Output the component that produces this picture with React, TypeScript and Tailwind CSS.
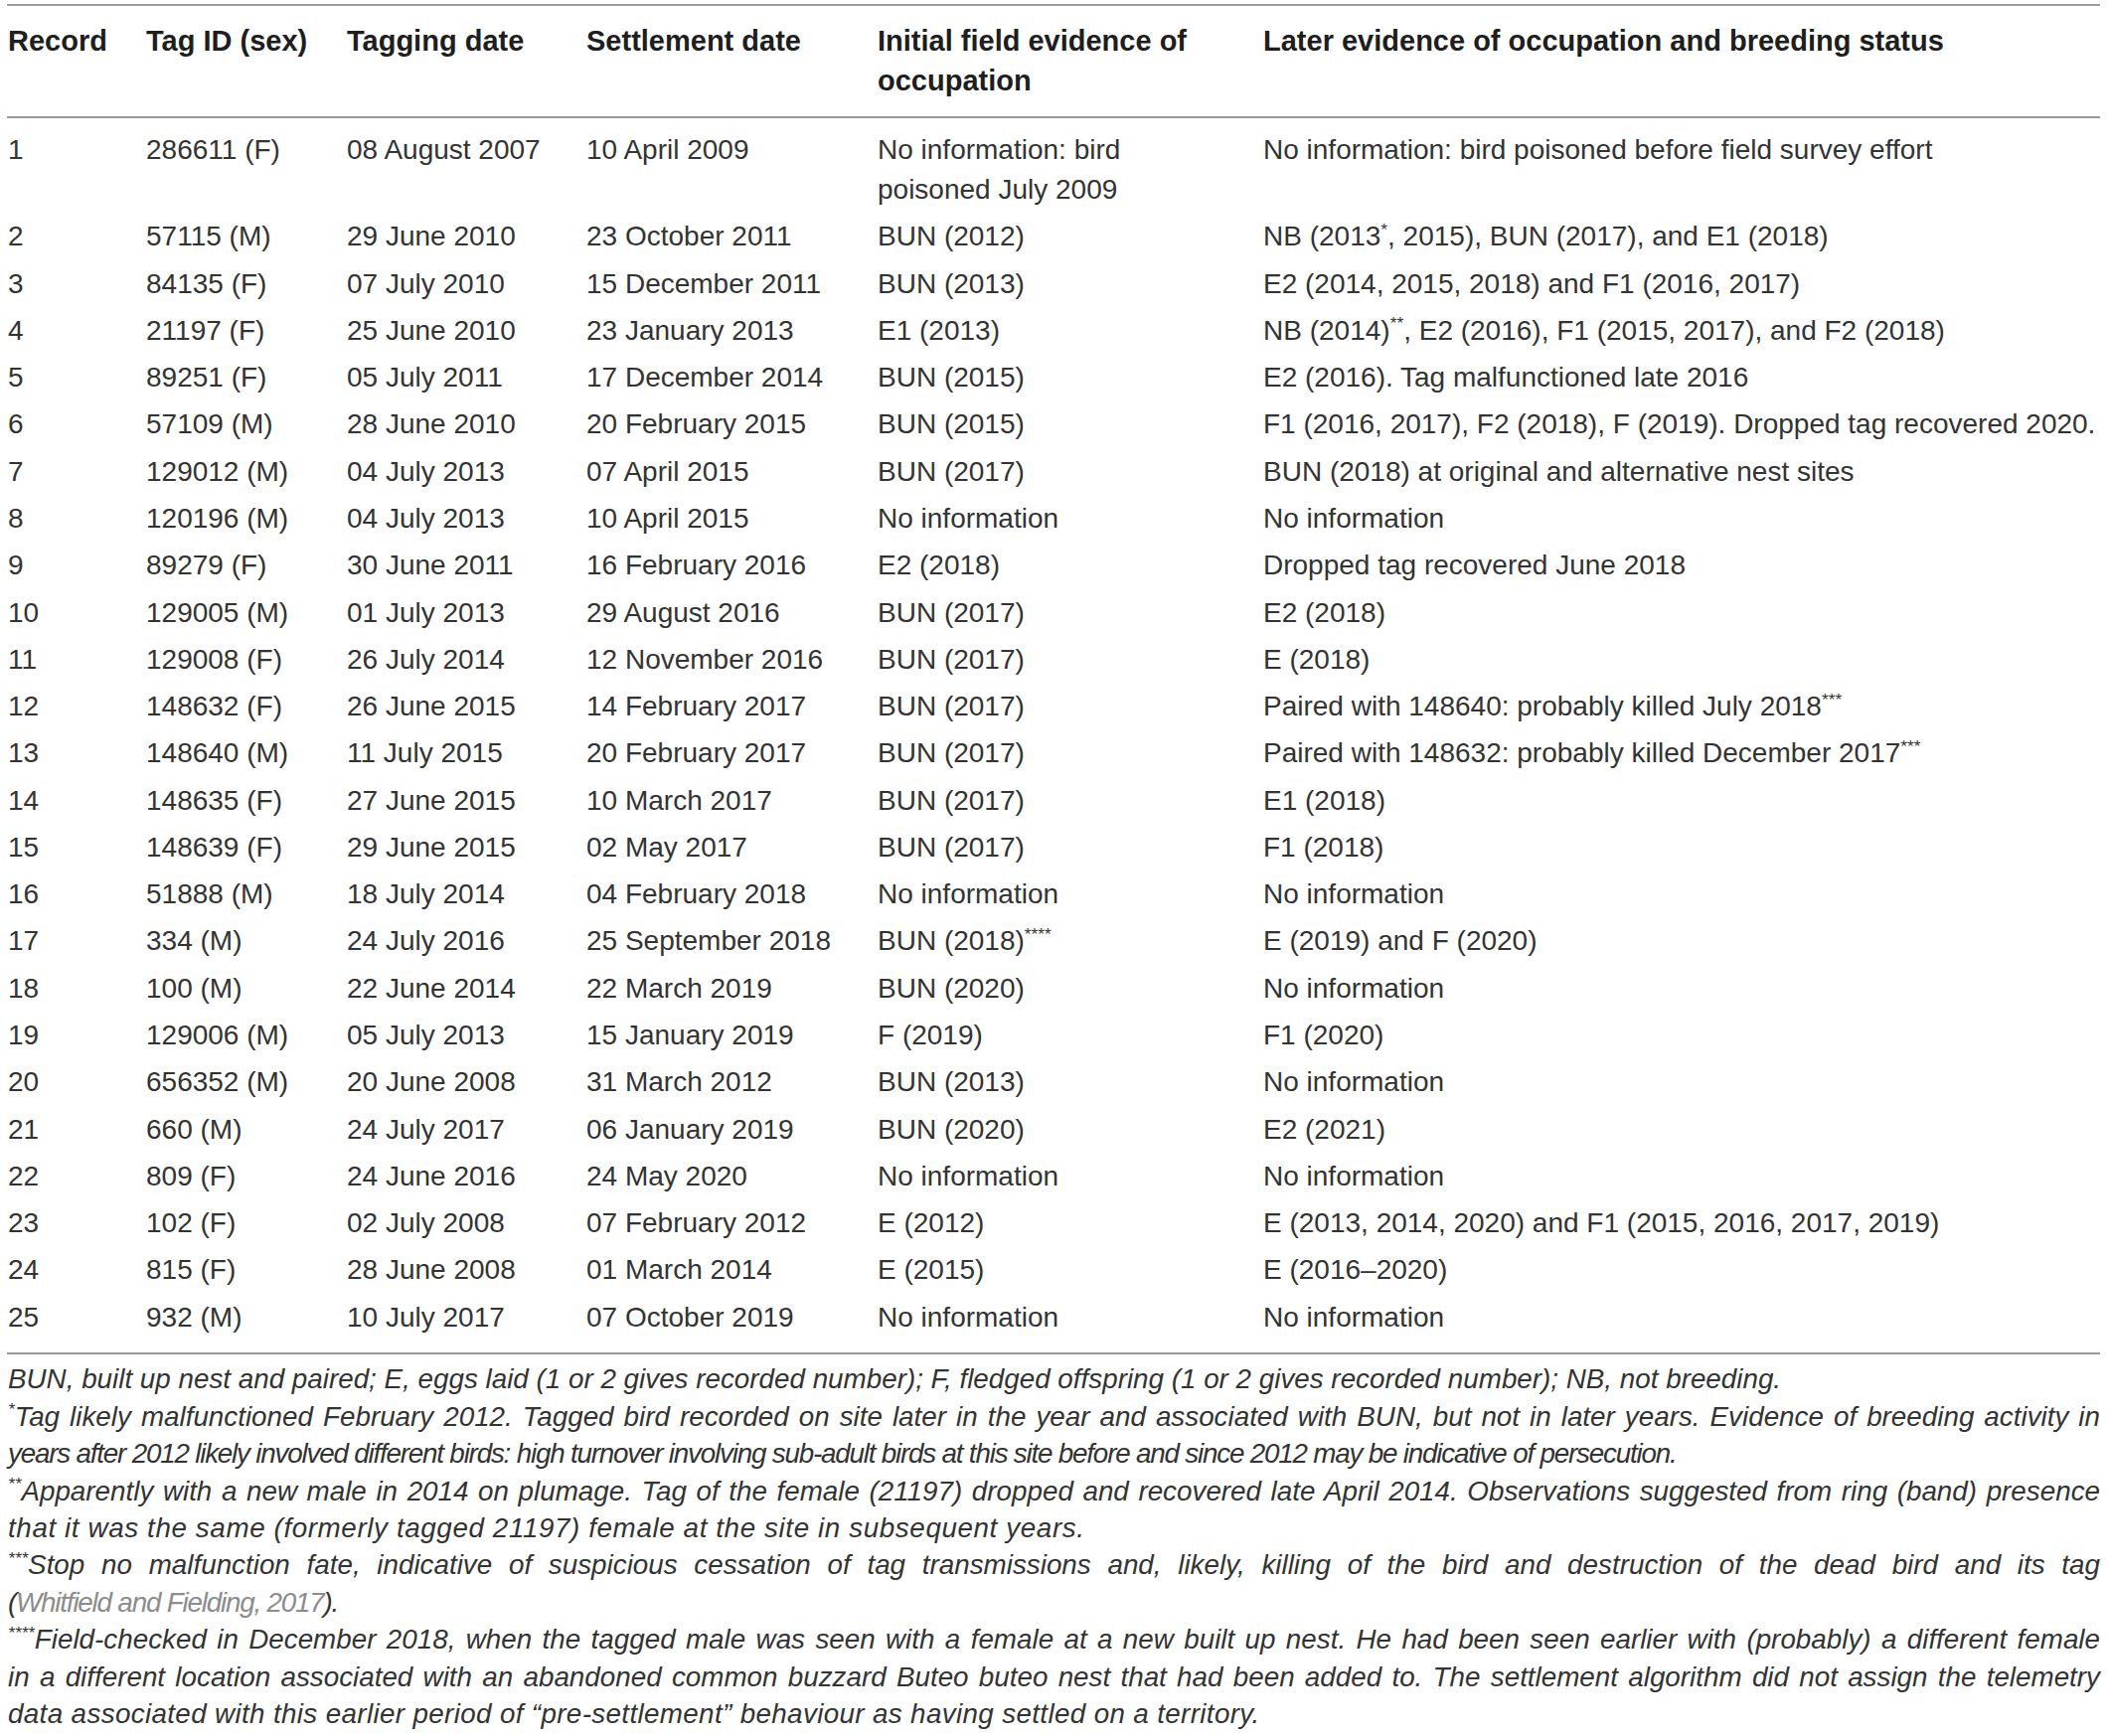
// Table: tagged eagle settlement records with footnotes
type Row = {
  record: string;
  tag: string;
  tagging: string;
  settlement: string;
  initial: React.ReactNode;
  later: React.ReactNode;
};

const Star = ({ n }: { n: number }) => <sup className="text-[0.62em] top-[-0.6em]">{'*'.repeat(n)}</sup>;

const rows: Row[] = [
  {
    record: '1',
    tag: '286611 (F)',
    tagging: '08 August 2007',
    settlement: '10 April 2009',
    initial: (
      <>
        No information: bird
        <br />
        poisoned July 2009
      </>
    ),
    later: 'No information: bird poisoned before field survey effort',
  },
  {
    record: '2',
    tag: '57115 (M)',
    tagging: '29 June 2010',
    settlement: '23 October 2011',
    initial: 'BUN (2012)',
    later: (
      <>
        NB (2013<Star n={1} />, 2015), BUN (2017), and E1 (2018)
      </>
    ),
  },
  { record: '3', tag: '84135 (F)', tagging: '07 July 2010', settlement: '15 December 2011', initial: 'BUN (2013)', later: 'E2 (2014, 2015, 2018) and F1 (2016, 2017)' },
  {
    record: '4',
    tag: '21197 (F)',
    tagging: '25 June 2010',
    settlement: '23 January 2013',
    initial: 'E1 (2013)',
    later: (
      <>
        NB (2014)<Star n={2} />, E2 (2016), F1 (2015, 2017), and F2 (2018)
      </>
    ),
  },
  { record: '5', tag: '89251 (F)', tagging: '05 July 2011', settlement: '17 December 2014', initial: 'BUN (2015)', later: 'E2 (2016). Tag malfunctioned late 2016' },
  { record: '6', tag: '57109 (M)', tagging: '28 June 2010', settlement: '20 February 2015', initial: 'BUN (2015)', later: 'F1 (2016, 2017), F2 (2018), F (2019). Dropped tag recovered 2020.' },
  { record: '7', tag: '129012 (M)', tagging: '04 July 2013', settlement: '07 April 2015', initial: 'BUN (2017)', later: 'BUN (2018) at original and alternative nest sites' },
  { record: '8', tag: '120196 (M)', tagging: '04 July 2013', settlement: '10 April 2015', initial: 'No information', later: 'No information' },
  { record: '9', tag: '89279 (F)', tagging: '30 June 2011', settlement: '16 February 2016', initial: 'E2 (2018)', later: 'Dropped tag recovered June 2018' },
  { record: '10', tag: '129005 (M)', tagging: '01 July 2013', settlement: '29 August 2016', initial: 'BUN (2017)', later: 'E2 (2018)' },
  { record: '11', tag: '129008 (F)', tagging: '26 July 2014', settlement: '12 November 2016', initial: 'BUN (2017)', later: 'E (2018)' },
  {
    record: '12',
    tag: '148632 (F)',
    tagging: '26 June 2015',
    settlement: '14 February 2017',
    initial: 'BUN (2017)',
    later: (
      <>
        Paired with 148640: probably killed July 2018<Star n={3} />
      </>
    ),
  },
  {
    record: '13',
    tag: '148640 (M)',
    tagging: '11 July 2015',
    settlement: '20 February 2017',
    initial: 'BUN (2017)',
    later: (
      <>
        Paired with 148632: probably killed December 2017<Star n={3} />
      </>
    ),
  },
  { record: '14', tag: '148635 (F)', tagging: '27 June 2015', settlement: '10 March 2017', initial: 'BUN (2017)', later: 'E1 (2018)' },
  { record: '15', tag: '148639 (F)', tagging: '29 June 2015', settlement: '02 May 2017', initial: 'BUN (2017)', later: 'F1 (2018)' },
  { record: '16', tag: '51888 (M)', tagging: '18 July 2014', settlement: '04 February 2018', initial: 'No information', later: 'No information' },
  {
    record: '17',
    tag: '334 (M)',
    tagging: '24 July 2016',
    settlement: '25 September 2018',
    initial: (
      <>
        BUN (2018)<Star n={4} />
      </>
    ),
    later: 'E (2019) and F (2020)',
  },
  { record: '18', tag: '100 (M)', tagging: '22 June 2014', settlement: '22 March 2019', initial: 'BUN (2020)', later: 'No information' },
  { record: '19', tag: '129006 (M)', tagging: '05 July 2013', settlement: '15 January 2019', initial: 'F (2019)', later: 'F1 (2020)' },
  { record: '20', tag: '656352 (M)', tagging: '20 June 2008', settlement: '31 March 2012', initial: 'BUN (2013)', later: 'No information' },
  { record: '21', tag: '660 (M)', tagging: '24 July 2017', settlement: '06 January 2019', initial: 'BUN (2020)', later: 'E2 (2021)' },
  { record: '22', tag: '809 (F)', tagging: '24 June 2016', settlement: '24 May 2020', initial: 'No information', later: 'No information' },
  { record: '23', tag: '102 (F)', tagging: '02 July 2008', settlement: '07 February 2012', initial: 'E (2012)', later: 'E (2013, 2014, 2020) and F1 (2015, 2016, 2017, 2019)' },
  { record: '24', tag: '815 (F)', tagging: '28 June 2008', settlement: '01 March 2014', initial: 'E (2015)', later: 'E (2016–2020)' },
  { record: '25', tag: '932 (M)', tagging: '10 July 2017', settlement: '07 October 2019', initial: 'No information', later: 'No information' },
];

const cols = 'grid grid-cols-[140px_202px_241px_293px_388px_1fr]';

// one footnote line; justified lines stretch to the full width
const Line = ({
  children,
  justify = false,
  className = '',
}: {
  children: React.ReactNode;
  justify?: boolean;
  className?: string;
}) => (
  <div className={`${justify ? 'text-justify [text-align-last:justify]' : ''} whitespace-nowrap ${className}`}>{children}</div>
);

export default function App() {
  return (
    <div className="w-[2120px] h-[1747px] bg-white text-[#1e1e1e] font-['Liberation_Sans',Arial,sans-serif] overflow-hidden">
      <div className="ml-[7px] w-[2106px] pt-[4px]">
        <div className="border-t-2 border-b-2 border-[#9a9a9a]">
          <div className={`${cols} pt-[15px] pb-[16px] text-[29px] leading-[40px] font-bold`}>
            <div className="pl-px">Record</div>
            <div>Tag ID (sex)</div>
            <div>Tagging date</div>
            <div>Settlement date</div>
            <div>
              Initial field evidence of
              <br />
              occupation
            </div>
            <div>Later evidence of occupation and breeding status</div>
          </div>
        </div>

        <div className="border-b-2 border-[#9a9a9a] pt-[8.35px] pb-[12px] text-[28px] leading-[40px] text-[#333333]">
          {rows.map((r) => (
            <div key={r.record} className={`${cols} py-[3.65px]`}>
              <div className="pl-px">{r.record}</div>
              <div>{r.tag}</div>
              <div>{r.tagging}</div>
              <div>{r.settlement}</div>
              <div>{r.initial}</div>
              <div className="whitespace-nowrap">{r.later}</div>
            </div>
          ))}
        </div>

        <div className="mt-[6px] pl-px text-[27.8px] leading-[37.4px] italic text-[#333333]">
          <Line>
            BUN, built up nest and paired; E, eggs laid (1 or 2 gives recorded number); F, fledged offspring (1 or 2 gives recorded
            number); NB, not breeding.
          </Line>
          <Line justify>
            <Star n={1} />
            Tag likely malfunctioned February 2012. Tagged bird recorded on site later in the year and associated with BUN, but not in
            later years. Evidence of breeding activity in
          </Line>
          <Line className="tracking-[-1.2px]">
            years after 2012 likely involved different birds: high turnover involving sub-adult birds at this site before and since 2012
            may be indicative of persecution.
          </Line>
          <Line justify>
            <Star n={2} />
            Apparently with a new male in 2014 on plumage. Tag of the female (21197) dropped and recovered late April 2014.
            Observations suggested from ring (band) presence
          </Line>
          <Line className="tracking-[0.6px]">that it was the same (formerly tagged 21197) female at the site in subsequent years.</Line>
          <Line justify>
            <Star n={3} />
            Stop no malfunction fate, indicative of suspicious cessation of tag transmissions and, likely, killing of the bird and
            destruction of the dead bird and its tag
          </Line>
          <Line className="tracking-[-1.2px]">
            (<span className="text-[#8c8c8c]">Whitfield and Fielding, 2017</span>).
          </Line>
          <Line justify>
            <Star n={4} />
            Field-checked in December 2018, when the tagged male was seen with a female at a new built up nest. He had been seen
            earlier with (probably) a different female
          </Line>
          <Line justify>
            in a different location associated with an abandoned common buzzard Buteo buteo nest that had been added to. The
            settlement algorithm did not assign the telemetry
          </Line>
          <Line className="tracking-[0.35px]">
            data associated with this earlier period of “pre-settlement” behaviour as having settled on a territory.
          </Line>
        </div>
      </div>
    </div>
  );
}
